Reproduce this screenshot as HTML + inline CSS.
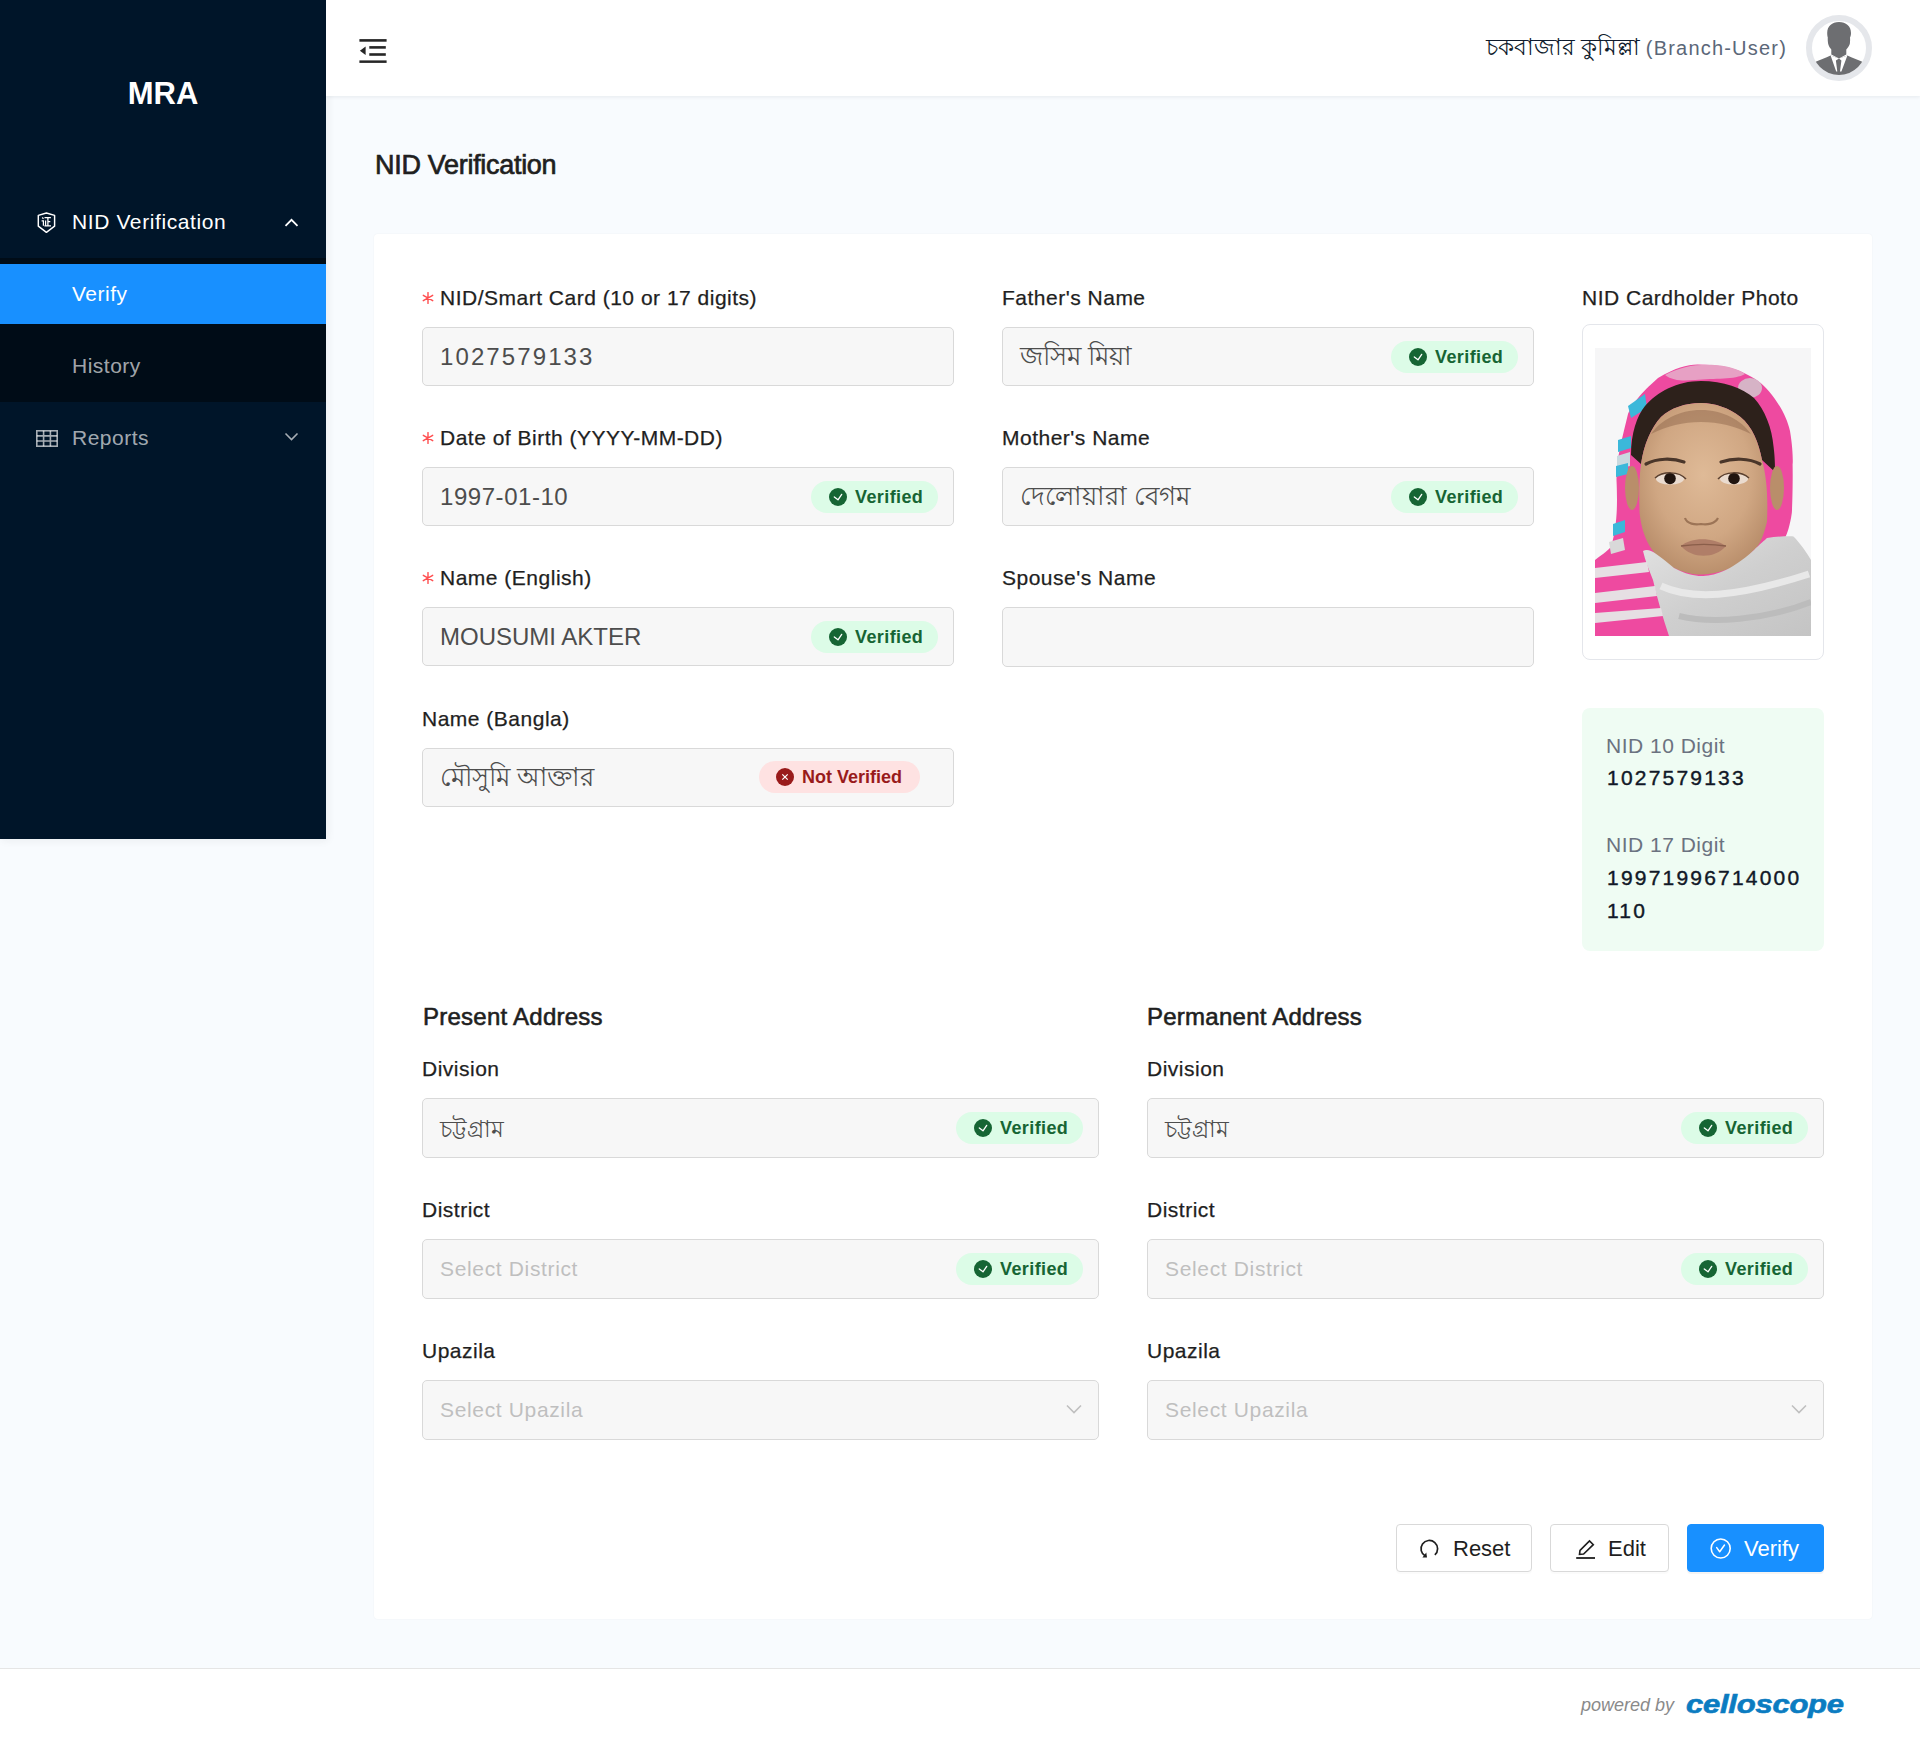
<!DOCTYPE html>
<html><head><meta charset="utf-8">
<style>
*{box-sizing:border-box;margin:0;padding:0}
html,body{width:1920px;height:1741px;overflow:hidden}
body{position:relative;background:#f8fbfe;font-family:"Liberation Sans",sans-serif;color:#1f1f1f}
.abs{position:absolute}
#side{left:0;top:0;width:326px;height:839px;background:#001529;box-shadow:2px 2px 8px rgba(29,35,41,.06)}
#logo{left:0;top:71px;width:326px;text-align:center;color:#fff;font-weight:bold;font-size:31px;line-height:46px}
.mi{left:0;width:326px;height:30px;color:#fff;font-size:21px;line-height:30px;letter-spacing:.5px}
.mi .t{position:absolute;left:72px;top:0}
#sub{left:0;top:258px;width:326px;height:144px;background:#000c17}
#sel{left:0;top:264px;width:326px;height:60px;background:#1890ff}
#header{left:326px;top:0;width:1594px;height:96px;background:#fff;box-shadow:0 1px 4px rgba(0,21,41,.08)}
#title{left:375px;top:147px;font-size:27px;font-weight:normal;color:#1f1f1f;line-height:36px;letter-spacing:-.3px;-webkit-text-stroke:.7px #1f1f1f}
#card{left:374px;top:234px;width:1498px;height:1385px;background:#fff;border-radius:4px;box-shadow:0 0 2px rgba(0,20,40,.05)}
.lbl{font-size:21px;line-height:30px;color:#1f1f1f;white-space:nowrap;letter-spacing:.5px;-webkit-text-stroke:.25px #1f1f1f}
.req{color:#ff4d4f;font-size:19px;margin-right:6px;position:relative;top:1px}
.inp{background:#f7f7f7;border:1px solid #d9d9d9;border-radius:5px}
.val{font-size:24px;line-height:59px;color:#4d4d4d;white-space:nowrap;letter-spacing:1px}
.val.bn{font-size:26px;color:#4d4d4d;letter-spacing:0}
.val.ph{color:#bfbfbf;font-size:21px;letter-spacing:.65px}
.tag{height:32px;border-radius:16px;background:#dcfce7;color:#166534;font-size:18px;font-weight:bold;line-height:32px;letter-spacing:.4px}
.tag .ic{position:absolute;top:7px;width:18px;height:18px;line-height:0}
.tag .tt{position:absolute;top:0}
.tag.no{background:#fee2e2;color:#991b1b}
.sec{font-size:24px;font-weight:normal;color:#1f1f1f;line-height:30px;letter-spacing:.25px;-webkit-text-stroke:.6px #1f1f1f}
#photo{left:1582px;top:324px;width:242px;height:336px;border:1px solid #e4e6eb;border-radius:8px;background:#fff}
#nidbox{left:1582px;top:708px;width:242px;height:243px;background:#effcf3;border-radius:8px}
.nl{font-size:21px;color:#6b7280;line-height:30px;letter-spacing:.5px}
.nv{font-size:21px;color:#111827;line-height:33px;letter-spacing:2.2px;-webkit-text-stroke:.4px #111827}
.btn{height:48px;border:1px solid #d9d9d9;border-radius:4px;background:#fff;box-shadow:0 2px 0 rgba(0,0,0,.016);font-size:22px;line-height:48px;color:#1f1f1f}
.btn.p{background:#1890ff;border-color:#1890ff;color:#fff;box-shadow:0 2px 0 rgba(0,0,0,.045)}
#footer{left:0;top:1668px;width:1920px;height:73px;background:#fff;border-top:1px solid #e5e5e5}
</style></head>
<body>
<div id="side" class="abs"></div>
<div id="logo" class="abs">MRA</div>
<svg class="abs" style="left:36px;top:211px" width="21" height="23" viewBox="0 0 21 23"><path d="M10.4 2L18.6 4.4V15.2L10.4 21.3L2.3 15.2V4.4Z" fill="none" stroke="#fff" stroke-width="1.45" stroke-linejoin="round"/><path d="M6.2 6.5L7.5 7.7M5.6 9.9H7.4V14.8M8.5 6.7H14.9M11.9 6.7V14.6M11.9 10.6H14.3M9.6 9.6V14.6M8.4 14.8H15" fill="none" stroke="#fff" stroke-width="1.25"/></svg>
<div class="abs mi" style="top:207px;letter-spacing:.6px"><span class="t">NID Verification</span></div>
<svg class="abs" style="left:284px;top:217px" width="15" height="11" viewBox="0 0 15 11"><path d="M1.5 8.8L7.5 2.8L13.5 8.8" fill="none" stroke="#fff" stroke-width="1.8"/></svg>
<div id="sub" class="abs"></div>
<div id="sel" class="abs"></div>
<div class="abs mi" style="top:279px"><span class="t">Verify</span></div>
<div class="abs mi" style="top:351px;color:rgba(255,255,255,.65)"><span class="t">History</span></div>
<svg class="abs" style="left:36px;top:430px" width="22" height="17" viewBox="0 0 22 17"><g fill="none" stroke="rgba(255,255,255,.65)" stroke-width="1.6"><rect x=".8" y=".8" width="20.4" height="15.4"/><path d="M.8 5.9H21.2M.8 11H21.2M7.6 .8V16.2M14.4 .8V16.2"/></g></svg>
<div class="abs mi" style="top:423px;color:rgba(255,255,255,.65)"><span class="t">Reports</span></div>
<svg class="abs" style="left:284px;top:431px" width="15" height="11" viewBox="0 0 15 11"><path d="M1.5 2.5L7.5 8.5L13.5 2.5" fill="none" stroke="rgba(255,255,255,.65)" stroke-width="1.6"/></svg>

<div id="header" class="abs"></div>
<svg class="abs" style="left:359px;top:38px" width="29" height="26" viewBox="0 0 29 26"><g fill="#262626"><rect x="0.4" y="1.1" width="27.2" height="2.6"/><rect x="0.4" y="22.4" width="27.2" height="2.5"/><rect x="10.3" y="8.1" width="16.5" height="2.6"/><rect x="10.3" y="15.2" width="16.5" height="2.6"/><path d="M0.9 12.8L6.6 8.6V17Z"/></g></svg>
<div class="abs" style="left:1300px;top:32px;width:487px;text-align:right;font-size:20px;line-height:30px;white-space:nowrap"><span class="bnh" style="color:#0f1b2d;font-size:23px">চকবাজার কুমিল্লা</span> <span style="color:#5b6778;letter-spacing:1.2px">(Branch-User)</span></div>
<svg class="abs" style="left:1806px;top:15px" width="66" height="66" viewBox="0 0 66 66"><circle cx="33" cy="33" r="30" fill="#fff" stroke="#e5e7eb" stroke-width="6"/><clipPath id="av"><circle cx="33" cy="33" r="27"/></clipPath><g clip-path="url(#av)" fill="#6d6e71"><path d="M33 7C26 7 21.2 11 21.2 18C21.2 20 21.5 21.5 21.8 22.5C21.6 24 21.8 27 22.2 29C23 31.5 24 33 25.3 34.5V39.5L33 43.5L40.3 39.5V34.5C41.8 33 43 31 43.8 29C44.2 27 44.2 24 44 22.5C44.5 21.5 45 20 45 18C45 11 40 7 33 7Z"/><path d="M8 47.5C13 45 20 43 24.5 40.5L33 43.6L41.4 40.5C46 43 53 45 58 47.5L66 66H0Z"/></g><path d="M24.6 40.6L33 43.6L29.9 45.6L31.3 56.5L30.2 56.5Z" fill="#fff"/><path d="M41.4 40.6L33 43.6L35.4 45.6L34 56.5L35.4 56.5Z" fill="#fff"/></svg>

<div id="title" class="abs">NID Verification</div>
<div id="card" class="abs"></div>
<svg class="abs" style="left:422px;top:292px" width="12" height="12" viewBox="0 0 12 12"><path d="M6 .6V11.4M1.3 3.3L10.7 8.7M10.7 3.3L1.3 8.7" stroke="#ff4d4f" stroke-width="1.4" stroke-linecap="round"/></svg><div class="abs lbl" style="left:440px;top:283px">NID/Smart Card (10 or 17 digits)</div><div class="abs inp" style="left:422px;top:327px;width:532px;height:59px"></div><div class="abs val" style="left:440px;top:327px;line-height:59px;letter-spacing:2.1px;">1027579133</div><svg class="abs" style="left:422px;top:432px" width="12" height="12" viewBox="0 0 12 12"><path d="M6 .6V11.4M1.3 3.3L10.7 8.7M10.7 3.3L1.3 8.7" stroke="#ff4d4f" stroke-width="1.4" stroke-linecap="round"/></svg><div class="abs lbl" style="left:440px;top:423px">Date of Birth (YYYY-MM-DD)</div><div class="abs inp" style="left:422px;top:467px;width:532px;height:59px"></div><div class="abs val" style="left:440px;top:467px;line-height:59px;letter-spacing:0.55px;">1997-01-10</div><div class="abs tag" style="left:811px;top:481px;width:127px"><span class="ic" style="left:18px"><svg width="18" height="18" viewBox="0 0 18 18"><circle cx="9" cy="9" r="9" fill="#166534"/><path d="M5.3 8.9L9 11.8L12.7 6.4" fill="none" stroke="#fff" stroke-width="1.3" stroke-linecap="round" stroke-linejoin="round"/></svg></span><span class="tt" style="left:44px">Verified</span></div><svg class="abs" style="left:422px;top:572px" width="12" height="12" viewBox="0 0 12 12"><path d="M6 .6V11.4M1.3 3.3L10.7 8.7M10.7 3.3L1.3 8.7" stroke="#ff4d4f" stroke-width="1.4" stroke-linecap="round"/></svg><div class="abs lbl" style="left:440px;top:563px">Name (English)</div><div class="abs inp" style="left:422px;top:607px;width:532px;height:59px"></div><div class="abs val" style="left:440px;top:607px;line-height:59px;letter-spacing:0px;">MOUSUMI AKTER</div><div class="abs tag" style="left:811px;top:621px;width:127px"><span class="ic" style="left:18px"><svg width="18" height="18" viewBox="0 0 18 18"><circle cx="9" cy="9" r="9" fill="#166534"/><path d="M5.3 8.9L9 11.8L12.7 6.4" fill="none" stroke="#fff" stroke-width="1.3" stroke-linecap="round" stroke-linejoin="round"/></svg></span><span class="tt" style="left:44px">Verified</span></div><div class="abs lbl" style="left:422px;top:704px">Name (Bangla)</div><div class="abs inp" style="left:422px;top:748px;width:532px;height:59px"></div><div class="abs val bn" style="left:440px;top:748px;line-height:59px;">মৌসুমি আক্তার</div><div class="abs tag no" style="left:759px;top:761px;width:161px"><span class="ic" style="left:17px"><svg width="18" height="18" viewBox="0 0 18 18"><circle cx="9" cy="9" r="9" fill="#991b1b"/><path d="M6.3 6.3L11.7 11.7M11.7 6.3L6.3 11.7" fill="none" stroke="#fff" stroke-width="1.2"/></svg></span><span class="tt" style="left:43px;letter-spacing:0">Not Verified</span></div><div class="abs lbl" style="left:1002px;top:283px">Father's Name</div><div class="abs inp" style="left:1002px;top:327px;width:532px;height:59px"></div><div class="abs val bn" style="left:1020px;top:327px;line-height:59px;">জসিম মিয়া</div><div class="abs tag" style="left:1391px;top:341px;width:127px"><span class="ic" style="left:18px"><svg width="18" height="18" viewBox="0 0 18 18"><circle cx="9" cy="9" r="9" fill="#166534"/><path d="M5.3 8.9L9 11.8L12.7 6.4" fill="none" stroke="#fff" stroke-width="1.3" stroke-linecap="round" stroke-linejoin="round"/></svg></span><span class="tt" style="left:44px">Verified</span></div><div class="abs lbl" style="left:1002px;top:423px">Mother's Name</div><div class="abs inp" style="left:1002px;top:467px;width:532px;height:59px"></div><div class="abs val bn" style="left:1020px;top:467px;line-height:59px;">দেলোয়ারা বেগম</div><div class="abs tag" style="left:1391px;top:481px;width:127px"><span class="ic" style="left:18px"><svg width="18" height="18" viewBox="0 0 18 18"><circle cx="9" cy="9" r="9" fill="#166534"/><path d="M5.3 8.9L9 11.8L12.7 6.4" fill="none" stroke="#fff" stroke-width="1.3" stroke-linecap="round" stroke-linejoin="round"/></svg></span><span class="tt" style="left:44px">Verified</span></div><div class="abs lbl" style="left:1002px;top:563px">Spouse's Name</div><div class="abs inp" style="left:1002px;top:607px;width:532px;height:60px"></div><div class="abs lbl" style="left:422px;top:1054px">Division</div><div class="abs inp" style="left:422px;top:1098px;width:677px;height:60px"></div><div class="abs val bn" style="left:440px;top:1098px;line-height:60px;"><span style="font-size:23px">চট্টগ্রাম</span></div><div class="abs tag" style="left:956px;top:1112px;width:127px"><span class="ic" style="left:18px"><svg width="18" height="18" viewBox="0 0 18 18"><circle cx="9" cy="9" r="9" fill="#166534"/><path d="M5.3 8.9L9 11.8L12.7 6.4" fill="none" stroke="#fff" stroke-width="1.3" stroke-linecap="round" stroke-linejoin="round"/></svg></span><span class="tt" style="left:44px">Verified</span></div><div class="abs lbl" style="left:422px;top:1195px">District</div><div class="abs inp" style="left:422px;top:1239px;width:677px;height:60px"></div><div class="abs val ph" style="left:440px;top:1239px;line-height:60px;">Select District</div><div class="abs tag" style="left:956px;top:1253px;width:127px"><span class="ic" style="left:18px"><svg width="18" height="18" viewBox="0 0 18 18"><circle cx="9" cy="9" r="9" fill="#166534"/><path d="M5.3 8.9L9 11.8L12.7 6.4" fill="none" stroke="#fff" stroke-width="1.3" stroke-linecap="round" stroke-linejoin="round"/></svg></span><span class="tt" style="left:44px">Verified</span></div><div class="abs lbl" style="left:422px;top:1336px">Upazila</div><div class="abs inp" style="left:422px;top:1380px;width:677px;height:60px"></div><div class="abs val ph" style="left:440px;top:1380px;line-height:60px;">Select Upazila</div><svg class="abs" style="left:1066px;top:1403px" width="16" height="12" viewBox="0 0 16 12"><path d="M1 2.5l7 7 7-7" fill="none" stroke="#bfbfbf" stroke-width="1.6"/></svg><div class="abs lbl" style="left:1147px;top:1054px">Division</div><div class="abs inp" style="left:1147px;top:1098px;width:677px;height:60px"></div><div class="abs val bn" style="left:1165px;top:1098px;line-height:60px;"><span style="font-size:23px">চট্টগ্রাম</span></div><div class="abs tag" style="left:1681px;top:1112px;width:127px"><span class="ic" style="left:18px"><svg width="18" height="18" viewBox="0 0 18 18"><circle cx="9" cy="9" r="9" fill="#166534"/><path d="M5.3 8.9L9 11.8L12.7 6.4" fill="none" stroke="#fff" stroke-width="1.3" stroke-linecap="round" stroke-linejoin="round"/></svg></span><span class="tt" style="left:44px">Verified</span></div><div class="abs lbl" style="left:1147px;top:1195px">District</div><div class="abs inp" style="left:1147px;top:1239px;width:677px;height:60px"></div><div class="abs val ph" style="left:1165px;top:1239px;line-height:60px;">Select District</div><div class="abs tag" style="left:1681px;top:1253px;width:127px"><span class="ic" style="left:18px"><svg width="18" height="18" viewBox="0 0 18 18"><circle cx="9" cy="9" r="9" fill="#166534"/><path d="M5.3 8.9L9 11.8L12.7 6.4" fill="none" stroke="#fff" stroke-width="1.3" stroke-linecap="round" stroke-linejoin="round"/></svg></span><span class="tt" style="left:44px">Verified</span></div><div class="abs lbl" style="left:1147px;top:1336px">Upazila</div><div class="abs inp" style="left:1147px;top:1380px;width:677px;height:60px"></div><div class="abs val ph" style="left:1165px;top:1380px;line-height:60px;">Select Upazila</div><svg class="abs" style="left:1791px;top:1403px" width="16" height="12" viewBox="0 0 16 12"><path d="M1 2.5l7 7 7-7" fill="none" stroke="#bfbfbf" stroke-width="1.6"/></svg>
<div class="abs lbl" style="left:1582px;top:283px">NID Cardholder Photo</div>
<div id="photo" class="abs"></div>
<div class="abs" style="left:1595px;top:348px;width:216px;height:288px;line-height:0"><svg width="216" height="288" viewBox="0 0 216 288">
<defs>
<radialGradient id="fg" cx="50%" cy="42%" r="62%"><stop offset="0" stop-color="#dfba97"/><stop offset=".6" stop-color="#d0a783"/><stop offset="1" stop-color="#b68b68"/></radialGradient>
<linearGradient id="gs" x1="0" y1="0" x2="1" y2="1"><stop offset="0" stop-color="#e2e2e2"/><stop offset=".5" stop-color="#cfcfcf"/><stop offset="1" stop-color="#c4c4c4"/></linearGradient>
</defs>
<rect width="216" height="288" fill="#f6f6f7"/>
<path d="M0 212C8 206 14 202 16.5 198C21 180 23 165 21.5 132C22 110 25 99 33 66C38 55 45 46 63 30C80 20 92 16.5 102.5 16.5C125 17 140 20 149 25C160 30 168 36 173.7 43C186 58 192 70 195 83C198 100 198 116 197.6 116C198 140 197 165 196.8 165C195 178 192 186 190 190L150 210L74 288H0Z" fill="#ee4aa0"/>
<path d="M70 27C85 19 100 16 120 17C135 18 145 22 150 26C140 32 120 30 100 32C88 33 78 33 70 27Z" fill="#e7a0c4"/>
<ellipse cx="155" cy="40" rx="12" ry="10" fill="#d6b3c6"/>
<path d="M33 58L50 46L52 60L36 70Z" fill="#3bb8da"/>
<path d="M23 92L36 88L36 100L23 104Z" fill="#3bb8da"/>
<path d="M22 108L35 104L35 118L22 121Z" fill="#c9d9df"/>
<path d="M21 118L33 115L33 126L21 129Z" fill="#3bb8da"/>
<path d="M18 176L30 172L30 184L18 188Z" fill="#3bb8da"/>
<path d="M14 194L28 190L30 202L16 206Z" fill="#d9d9d9"/>
<path d="M36 107C36 85 42 68 50 58C62 44 82 33 106 33C128 33 148 40 159 50C170 62 177 80 178.6 99C180 110 180 118 180 124L167 112C164 95 157 78 145.5 69C134 60 120 55 106 55C90 55 76 60 66 69C56 80 49 96 46 116Z" fill="#2d211b"/>
<path d="M46 116C49 96 56 80 66 69C76 60 90 55 106 55C120 55 134 60 145.5 69C157 78 164 95 167 112C172 130 173 150 172 173.7C168 190 164 198 159 202C150 212 142 218 132 221.6C122 225 114 226.6 106 226.6C96 226.6 88 224 79 220C68 214 60 207 54.6 198C49 188 46 178 44.6 165C44 150 44 130 46 116Z" fill="url(#fg)"/>
<path d="M56 86C66 72 84 62 106 62C128 62 146 72 156 86C140 78 124 74 106 74C88 74 72 78 56 86Z" fill="#8a6248" opacity=".45"/>
<ellipse cx="37" cy="140" rx="7" ry="22" fill="#b98e6a"/>
<ellipse cx="182" cy="140" rx="7" ry="22" fill="#b98e6a"/>
<path d="M51 116C62 110 78 110 89 114" stroke="#4a362a" stroke-width="3.2" fill="none" stroke-linecap="round"/>
<path d="M126 114C138 110 154 110 165 116" stroke="#4a362a" stroke-width="3.2" fill="none" stroke-linecap="round"/>
<ellipse cx="75" cy="131" rx="14" ry="5.5" fill="#eadbcf"/>
<ellipse cx="139" cy="131" rx="14" ry="5.5" fill="#eadbcf"/>
<circle cx="75" cy="130.5" r="5.8" fill="#20140f"/>
<circle cx="139" cy="130.5" r="5.8" fill="#20140f"/>
<path d="M60 130C68 123 84 123 91 131" stroke="#5a4030" stroke-width="1.5" fill="none"/>
<path d="M123 131C130 123 146 123 154 130" stroke="#5a4030" stroke-width="1.5" fill="none"/>
<path d="M90 170C92 176 100 177 106 176C112 177 120 176 123 170" stroke="#9c7456" stroke-width="2.2" fill="none"/>
<path d="M86 198C96 189 118 189 131 198C120 211 97 211 86 198Z" fill="#b07e68"/>
<path d="M86 198C100 196 118 196 131 198" stroke="#8a5e4a" stroke-width="1.3" fill="none"/>
<path d="M48 203C54 200 60 204 79 220C90 226 100 228 106 228C118 228 135 224 159 202C165 196 170 192 172 190C185 188 198 188 198.5 188.5C205 195 212 205 216 212V288H74C68 270 62 250 58 232C54 222 50 212 48 203Z" fill="url(#gs)"/>
<path d="M66 238C96 252 140 250 214 226" stroke="#e8e8e8" stroke-width="7" fill="none"/>
<path d="M84 268C116 276 170 272 216 254" stroke="#bcbcbc" stroke-width="6" fill="none"/>
<path d="M0 220L52 214L54 224L0 230Z" fill="#e6dfe3"/>
<path d="M0 245L60 238L62 248L0 255Z" fill="#e6dfe3"/>
<path d="M0 265L66 260L68 268L0 275Z" fill="#e6dfe3"/>
</svg>
</div>
<div id="nidbox" class="abs"></div>
<div class="abs nl" style="left:1606px;top:731px">NID 10 Digit</div>
<div class="abs nv" style="left:1607px;top:761px">1027579133</div>
<div class="abs nl" style="left:1606px;top:830px">NID 17 Digit</div>
<div class="abs nv" style="left:1607px;top:861px;width:230px">19971996714000<br>110</div>

<div class="abs sec" style="left:423px;top:1002px">Present Address</div>
<div class="abs sec" style="left:1147px;top:1002px">Permanent Address</div>

<div class="abs btn" style="left:1396px;top:1524px;width:136px"><svg class="abs" style="left:22px;top:13px" width="22" height="22" viewBox="0 0 22 22"><path d="M15.85 16.9A8.3 8.3 0 1 0 6.3 18" fill="none" stroke="#1f1f1f" stroke-width="1.7"/><path d="M7.3 14.6L8 19.5L3.4 19.4Z" fill="#1f1f1f"/></svg><span class="abs" style="left:56px;top:0">Reset</span></div>
<div class="abs btn" style="left:1550px;top:1524px;width:119px"><svg class="abs" style="left:24px;top:13px" width="22" height="22" viewBox="0 0 22 22"><path d="M1.2 20H20" stroke="#1f1f1f" stroke-width="1.8"/><path d="M4.5 16.4L5 12.4L14.5 2.9L18.3 6.7L8.6 16Z" fill="none" stroke="#1f1f1f" stroke-width="1.6" stroke-linejoin="miter"/></svg><span class="abs" style="left:57px;top:0">Edit</span></div>
<div class="abs btn p" style="left:1687px;top:1524px;width:137px"><svg class="abs" style="left:22px;top:13px" width="22" height="22" viewBox="0 0 22 22"><circle cx="10.7" cy="10.5" r="9.5" fill="none" stroke="#fff" stroke-width="1.6"/><path d="M6.7 9.6L9.7 13.7L14.5 7" fill="none" stroke="#fff" stroke-width="1.5" stroke-linecap="round" stroke-linejoin="round"/></svg><span class="abs" style="left:56px;top:0">Verify</span></div>

<div id="footer" class="abs"></div>
<div class="abs" style="left:1581px;top:1692px;font-size:18px;font-style:italic;color:#8a8a8a;white-space:nowrap;line-height:26px">powered by</div>
<div class="abs" style="left:1686px;top:1687px;font-size:25px;font-style:italic;font-weight:bold;color:#0b7cc1;white-space:nowrap;line-height:34px;letter-spacing:-.2px;transform:scaleX(1.24);transform-origin:0 0;-webkit-text-stroke:.6px #0b7cc1">celloscope</div>
</body></html>
